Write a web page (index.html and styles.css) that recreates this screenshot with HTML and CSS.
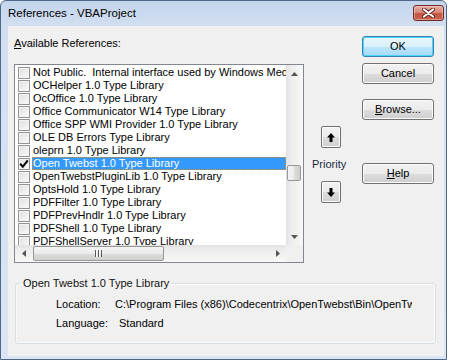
FILE: index.html
```html
<!DOCTYPE html>
<html>
<head>
<meta charset="utf-8">
<title>References - VBAProject</title>
<link rel="stylesheet" href="styles.css">
</head>
<body>
<div class="window">
  <div class="titlebar">
    <span class="title">References - VBAProject</span>
    <div class="close">
      <svg width="13" height="10" viewBox="0 0 13 10"><path d="M2 1.5 L11 8.5 M11 1.5 L2 8.5" stroke="#5a1f18" stroke-width="3.8" stroke-linecap="round"/><path d="M2 1.5 L11 8.5 M11 1.5 L2 8.5" stroke="#fff" stroke-width="2.2" stroke-linecap="round"/></svg>
    </div>
  </div>
  <div class="client">
    <div class="top">
      <div class="leftcol">
        <div class="label"><u>A</u>vailable References:</div>
        <div class="listbox">
          <div class="listmain">
            <div class="rows">
              <div class="row"><span class="cb"></span><span class="txt">Not Public.&nbsp; Internal interface used by Windows Media Player</span></div>
              <div class="row"><span class="cb"></span><span class="txt">OCHelper 1.0 Type Library</span></div>
              <div class="row"><span class="cb"></span><span class="txt">OcOffice 1.0 Type Library</span></div>
              <div class="row"><span class="cb"></span><span class="txt">Office Communicator W14 Type Library</span></div>
              <div class="row"><span class="cb"></span><span class="txt">Office SPP WMI Provider 1.0 Type Library</span></div>
              <div class="row"><span class="cb"></span><span class="txt">OLE DB Errors Type Library</span></div>
              <div class="row"><span class="cb"></span><span class="txt">oleprn 1.0 Type Library</span></div>
              <div class="row"><span class="cb checked"><svg width="10" height="10" viewBox="0 0 10 10"><path d="M1.2 4.8 L3.8 7.6 L8.8 1.4" fill="none" stroke="#000" stroke-width="2"/></svg></span><span class="txt selected">Open Twebst 1.0 Type Library</span></div>
              <div class="row"><span class="cb"></span><span class="txt">OpenTwebstPluginLib 1.0 Type Library</span></div>
              <div class="row"><span class="cb"></span><span class="txt">OptsHold 1.0 Type Library</span></div>
              <div class="row"><span class="cb"></span><span class="txt">PDFFilter 1.0 Type Library</span></div>
              <div class="row"><span class="cb"></span><span class="txt">PDFPrevHndlr 1.0 Type Library</span></div>
              <div class="row"><span class="cb"></span><span class="txt">PDFShell 1.0 Type Library</span></div>
              <div class="row"><span class="cb"></span><span class="txt">PDFShellServer 1.0 Type Library</span></div>
            </div>
            <div class="vscroll">
              <div class="sarrow"><svg width="7" height="4" viewBox="0 0 7 4"><path d="M0 4 L3.5 0 L7 4 Z" fill="#555"/></svg></div>
              <div class="vtrack"><div class="vthumb"></div></div>
              <div class="sarrow"><svg width="7" height="4" viewBox="0 0 7 4"><path d="M0 0 L3.5 4 L7 0 Z" fill="#555"/></svg></div>
            </div>
          </div>
          <div class="hrow">
            <div class="hscroll">
              <div class="sarrow"><svg width="4" height="7" viewBox="0 0 4 7"><path d="M4 0 L0 3.5 L4 7 Z" fill="#555"/></svg></div>
              <div class="htrack"><div class="hthumb"><svg width="7" height="7" viewBox="0 0 7 7"><path d="M0.5 0 V7 M3.5 0 V7 M6.5 0 V7" stroke="#5a5a5a" stroke-width="1"/><path d="M1.5 0 V7 M4.5 0 V7" stroke="#fff" stroke-width="1"/></svg></div></div>
              <div class="sarrow"><svg width="4" height="7" viewBox="0 0 4 7"><path d="M0 0 L4 3.5 L0 7 Z" fill="#555"/></svg></div>
            </div>
            <div class="corner"></div>
          </div>
        </div>
      </div>
      <div class="midcol">
        <div class="prio-btn"><svg width="8" height="9" viewBox="0 0 8 9"><path d="M4 0 L8 4.5 H5.5 V9 H2.5 V4.5 H0 Z" fill="#000"/></svg></div>
        <div class="prio-label">Priority</div>
        <div class="prio-btn"><svg width="8" height="9" viewBox="0 0 8 9"><path d="M4 9 L8 4.5 H5.5 V0 H2.5 V4.5 H0 Z" fill="#000"/></svg></div>
      </div>
      <div class="rightcol">
        <div class="btn default">OK</div>
        <div class="btn cancel">Cancel</div>
        <div class="btn browse"><u>B</u>rowse...</div>
        <div class="btn help"><u>H</u>elp</div>
      </div>
    </div>
    <fieldset class="group">
      <legend>Open Twebst 1.0 Type Library</legend>
      <div class="info-row first"><span class="info-label">Location:</span><span class="info-value">C:\Program Files (x86)\Codecentrix\OpenTwebst\Bin\OpenTwebst.dll</span></div>
      <div class="info-row"><span class="info-label">Language:</span><span class="info-value lang">Standard</span></div>
    </fieldset>
  </div>
</div>
</body>
</html>
```
FILE: styles.css
```css
html, body {
  margin: 0;
  padding: 0;
  background: #ffffff;
}
body {
  font-family: "Liberation Sans", Arial, sans-serif;
  font-size: 11px;
  color: #000;
  overflow: hidden;
}
.window {
  width: 447px;
  height: 360px;
  box-sizing: border-box;
  border: 1px solid #4d6888;
  border-radius: 6px 6px 0 0;
  background: linear-gradient(#c3d5ec 0px, #d2dff1 26px, #dbe5f3 100%);
  display: flex;
  flex-direction: column;
  overflow: hidden;
}
.titlebar {
  height: 25px;
  flex-shrink: 0;
  display: flex;
  align-items: flex-start;
}
.title {
  padding-left: 7px;
  line-height: 25px;
  font-size: 11.5px;
  color: #000;
}
.close {
  margin-left: auto;
  margin-top: 4px;
  margin-right: 2px;
  width: 31px;
  height: 16px;
  box-sizing: border-box;
  border: 1px solid #6e2a22;
  border-radius: 3px;
  background: linear-gradient(#e4aaa0 0%, #d88a7e 45%, #c45444 55%, #c9644f 100%);
  box-shadow: inset 0 0 0 1px rgba(255,255,255,0.35);
  display: flex;
  align-items: center;
  justify-content: center;
}
.client {
  flex: 1;
  margin: 0 2px 3px 7px;
  background: #f0f0f0;
  display: flex;
  flex-direction: column;
}
.top {
  display: flex;
}
.leftcol {
  margin-left: 6px;
  width: 290px;
}
.label {
  margin-top: 11px;
  height: 13px;
  line-height: 13px;
  margin-bottom: 14px;
}
.listbox {
  width: 290px;
  height: 199px;
  box-sizing: border-box;
  border: 1px solid #828790;
  background: #fff;
  display: flex;
  flex-direction: column;
}
.listmain {
  display: flex;
  height: 180px;
}
.rows {
  width: 271px;
  height: 180px;
  overflow: hidden;
  padding-top: 1px;
  box-sizing: border-box;
}
.row {
  height: 13px;
  display: flex;
  align-items: center;
  white-space: nowrap;
}
.cb {
  width: 12px;
  height: 12px;
  box-sizing: border-box;
  flex-shrink: 0;
  margin-left: 3px;
  margin-right: 2px;
  border: 1px solid #939393;
  background: linear-gradient(135deg, #dedede, #fbfbfb);
  box-shadow: inset 0 0 0 1px #f4f4f4;
  display: flex;
  align-items: center;
  justify-content: center;
}
.cb svg { display: block; }
.txt {
  flex: 1;
  height: 13px;
  line-height: 13px;
  padding-left: 1px;
  overflow: hidden;
  box-sizing: border-box;
}
.txt.selected {
  background: #3399ff;
  color: #fff;
  outline: 1px dotted #e08a22;
  outline-offset: -1px;
}
.vscroll {
  width: 17px;
  height: 180px;
  display: flex;
  flex-direction: column;
  background: linear-gradient(to right, #e2e2e2 0%, #ececec 25%, #f4f4f4 75%, #f8f8f8 100%);
}
.sarrow {
  width: 17px;
  height: 17px;
  flex-shrink: 0;
  display: flex;
  align-items: center;
  justify-content: center;
}
.vtrack {
  flex: 1;
}
.vthumb {
  margin-top: 83px;
  margin-left: 1px;
  width: 14px;
  height: 16px;
  box-sizing: border-box;
  border: 1px solid #979797;
  border-radius: 2px;
  background: linear-gradient(to right, #f4f4f4 0%, #ebebeb 50%, #dcdcdc 51%, #d0d0d0 100%);
}
.hrow {
  display: flex;
  height: 17px;
}
.hscroll {
  width: 271px;
  display: flex;
  background: linear-gradient(#e2e2e2 0%, #ececec 25%, #f4f4f4 75%, #f8f8f8 100%);
}
.htrack {
  flex: 1;
  display: flex;
}
.hthumb {
  margin-top: 1px;
  margin-left: 1px;
  width: 131px;
  height: 15px;
  box-sizing: border-box;
  border: 1px solid #979797;
  border-radius: 2px;
  background: linear-gradient(#f4f4f4 0%, #ebebeb 50%, #dcdcdc 51%, #d0d0d0 100%);
  display: flex;
  align-items: center;
  justify-content: center;
}
.corner {
  width: 17px;
  background: #f0f0f0;
}
.midcol {
  margin-left: 8px;
  width: 34px;
  padding-top: 100px;
  display: flex;
  flex-direction: column;
  align-items: flex-start;
}
.prio-btn {
  margin-left: 9px;
  width: 20px;
  height: 22px;
  box-sizing: border-box;
  border: 1px solid #707070;
  border-radius: 2px;
  background: linear-gradient(#f2f2f2 0%, #ebebeb 50%, #dddddd 51%, #cfcfcf 100%);
  box-shadow: inset 0 0 0 1px #fbfbfb;
  display: flex;
  align-items: center;
  justify-content: center;
}
.prio-label {
  margin-top: 10px;
  margin-bottom: 10px;
  line-height: 13px;
  height: 13px;
  color: #1a2a40;
}
.rightcol {
  margin-left: 16px;
  width: 72px;
  padding-top: 10px;
  display: flex;
  flex-direction: column;
}
.btn {
  height: 21px;
  box-sizing: border-box;
  border: 1px solid #707070;
  border-radius: 3px;
  background: linear-gradient(#f2f2f2 0%, #ebebeb 50%, #dddddd 51%, #cfcfcf 100%);
  box-shadow: inset 0 0 0 1px #fcfcfc;
  display: flex;
  align-items: center;
  justify-content: center;
  line-height: 13px;
}
.btn.default {
  border-color: #3c7fb1;
  background: linear-gradient(#eaf6fd 0%, #d9f0fc 50%, #bee6fd 51%, #a7d9f5 100%);
  box-shadow: inset 0 0 0 1px #48d6fb;
}
.btn.cancel { margin-top: 6px; }
.btn.browse { margin-top: 15px; }
.btn.help { margin-top: 43px; }
.group {
  margin: 13px 0 0 7px;
  padding: 0;
  width: 421px;
  height: 68px;
  box-sizing: border-box;
  border: 1px solid #d5dfe5;
  border-radius: 3px;
  box-shadow: inset 0 0 0 1px #fbfbfb;
  min-width: 0;
}
.group legend {
  margin-left: 5px;
  padding: 0 2px;
  line-height: 14px;
  height: 14px;
  color: #111;
}
.info-row {
  display: flex;
  height: 19px;
  line-height: 19px;
  white-space: nowrap;
}
.info-row.first {
  margin-top: 5px;
}
.info-label {
  margin-left: 40px;
  width: 59px;
  flex-shrink: 0;
}
.info-value {
  width: 297px;
  overflow: hidden;
}
.info-value.lang {
  padding-left: 4px;
}
```
